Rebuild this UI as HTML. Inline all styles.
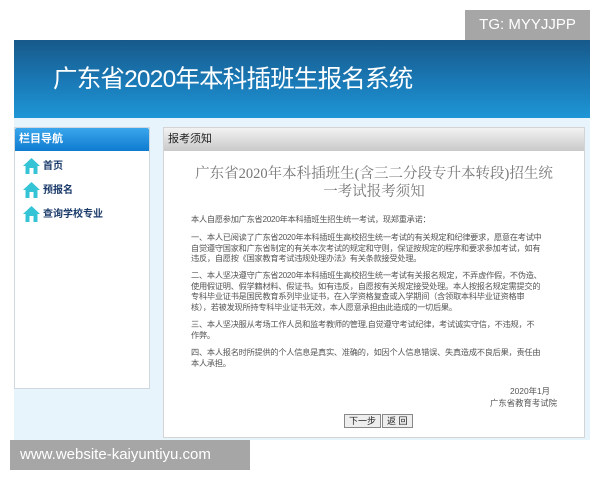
<!DOCTYPE html>
<html><head><meta charset="utf-8">
<style>
*{margin:0;padding:0;box-sizing:border-box}
body{width:600px;height:480px;background:#fff;position:relative;overflow:hidden;font-family:"Liberation Sans","Noto Sans CJK SC",sans-serif}
.tg{position:absolute;left:465px;top:10px;width:125px;height:30px;background:#a6a6a6;color:#fff;font-size:15px;line-height:30px;text-align:center}
.banner{position:absolute;left:14px;top:40px;width:576px;height:78px;background:linear-gradient(#17598a,#1a7ab7 55%,#1e96d6)}
.banner h1{position:absolute;left:39px;top:20px;color:#fff;font-weight:normal;font-size:24.5px;letter-spacing:-0.8px}
.bg{position:absolute;left:14px;top:118px;width:576px;height:322px;background:#e8f4fb}
.side{position:absolute;left:14px;top:127px;width:136px;height:262px;background:#fff;border:1px solid #cfd8df}
.side .h{height:23px;background:linear-gradient(#3aa6ec,#0f7bd0);color:#fff;font-size:11px;line-height:23px;padding-left:4px;font-weight:bold;border-radius:2px 2px 0 0}
.item{position:absolute;left:8px;height:20px;font-size:10px;font-weight:bold;color:#1a3a6a;line-height:20px}
.item svg{position:absolute;left:0;top:0}
.item span{position:absolute;left:21px;white-space:nowrap}
.main{position:absolute;left:163px;top:127px;width:422px;height:311px;background:#fff;border:1px solid #d4d4d4}
.main .h{height:23px;background:linear-gradient(#f2f2f2,#c9c9c9);font-size:11px;line-height:23px;padding-left:4px;color:#222}
.t{position:absolute;left:0;width:420px;text-align:center;color:#777;font-family:"Liberation Serif","Noto Serif CJK SC",serif;font-size:14.5px;line-height:18px}
.p{position:absolute;left:27px;width:372px;font-size:8.2px;line-height:10.5px;color:#555;letter-spacing:-0.25px;font-family:"Liberation Sans","WenQuanYi Zen Hei",sans-serif}
.r{position:absolute;right:27px;text-align:right;font-size:8.4px;line-height:12px;color:#555}
.btns{position:absolute;left:180px;top:286px;font-size:0}
.btns span{display:inline-block;height:14px;border:1px solid #888;background:#eee;font-size:9px;line-height:12px;padding:0 4px;color:#222;margin-right:1px}
.wm{position:absolute;left:10px;top:440px;width:240px;height:30px;background:#a6a6a6;color:#fff;font-size:15px;line-height:30px;padding-left:10px}
</style></head><body>
<div class="tg">TG: MYYJJPP</div>
<div class="banner"><h1>广东省2020年本科插班生报名系统</h1></div>
<div class="bg"></div>
<div class="side"><div class="h">栏目导航</div></div>
<div class="item" style="left:22px;top:157px"><svg width="19" height="18" viewBox="0 0 19 18"><path d="M9.5 1 L1 9 L3.5 9 L3.5 17 L15.5 17 L15.5 9 L18 9 Z" fill="#35c3d6"/><rect x="7.5" y="11" width="4" height="6" fill="#fff"/></svg><span>首页</span></div>
<div class="item" style="left:22px;top:181px"><svg width="19" height="18" viewBox="0 0 19 18"><path d="M9.5 1 L1 9 L3.5 9 L3.5 17 L15.5 17 L15.5 9 L18 9 Z" fill="#35c3d6"/><rect x="7.5" y="11" width="4" height="6" fill="#fff"/></svg><span>预报名</span></div>
<div class="item" style="left:22px;top:205px"><svg width="19" height="18" viewBox="0 0 19 18"><path d="M9.5 1 L1 9 L3.5 9 L3.5 17 L15.5 17 L15.5 9 L18 9 Z" fill="#35c3d6"/><rect x="7.5" y="11" width="4" height="6" fill="#fff"/></svg><span>查询学校专业</span></div>
<div class="main"><div class="h">报考须知</div>
<div class="t" style="top:37px">广东省2020年本科插班生(含三二分段专升本转段)招生统<br>一考试报考须知</div>
<div class="p" style="top:87px">本人自愿参加广东省2020年本科插班生招生统一考试，现郑重承诺：</div>
<div class="p" style="top:105px">一、本人已阅读了广东省2020年本科插班生高校招生统一考试的有关规定和纪律要求，愿意在考试中<br>自觉遵守国家和广东省制定的有关本次考试的规定和守则，保证按规定的程序和要求参加考试，如有<br>违反，自愿按《国家教育考试违规处理办法》有关条款接受处理。</div>
<div class="p" style="top:143px">二、本人坚决遵守广东省2020年本科插班生高校招生统一考试有关报名规定，不弄虚作假，不伪造、<br>使用假证明、假学籍材料、假证书。如有违反，自愿按有关规定接受处理。本人按报名规定需提交的<br>专科毕业证书是国民教育系列毕业证书，在入学资格复查或入学期间（含领取本科毕业证资格审<br>核），若被发现所持专科毕业证书无效，本人愿意承担由此造成的一切后果。</div>
<div class="p" style="top:192px">三、本人坚决服从考场工作人员和监考教师的管理,自觉遵守考试纪律，考试诚实守信，不违规，不<br>作弊。</div>
<div class="p" style="top:220px">四、本人报名时所提供的个人信息是真实、准确的，如因个人信息错误、失真造成不良后果，责任由<br>本人承担。</div>
<div class="r" style="top:257px">2020年1月&nbsp;&nbsp;&nbsp;<br>广东省教育考试院</div>
<div class="btns"><span>下一步</span><span>返 回</span></div>
</div>
<div class="wm">www.website-kaiyuntiyu.com</div>
</body></html>
